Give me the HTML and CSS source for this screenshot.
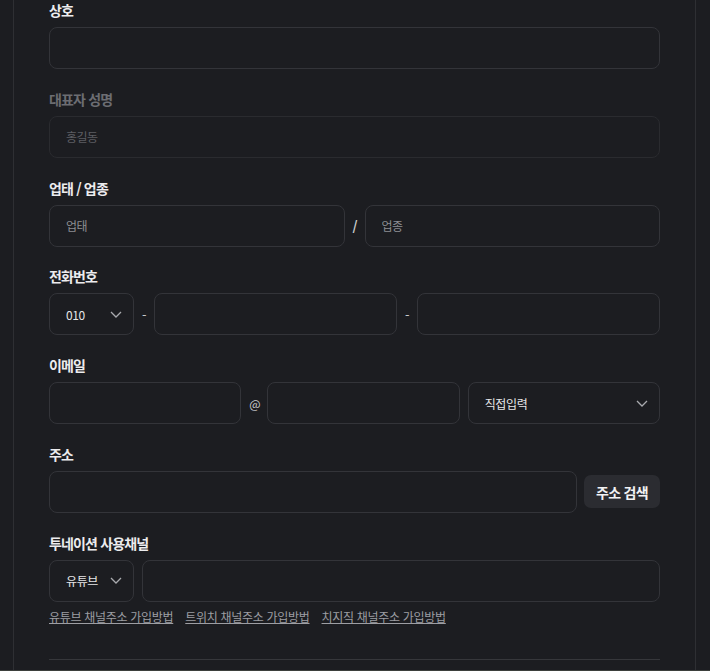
FILE: index.html
```html
<!DOCTYPE html>
<html lang="ko">
<head>
  <meta charset="UTF-8" />
  <title>사업자 정보</title>
  <link rel="stylesheet" href="styles.css">
</head>
<body>
  <div class="page">
    <div class="panel">

      <div class="field">
        <label class="field-label">상호</label>
        <input class="text-input" type="text" />
      </div>

      <div class="field disabled">
        <label class="field-label">대표자 성명</label>
        <input class="text-input" type="text" placeholder="홍길동" disabled />
      </div>

      <div class="field">
        <label class="field-label">업태 / 업종</label>
        <div class="row row-biz">
          <input class="text-input" type="text" placeholder="업태" />
          <span class="sep slash">/</span>
          <input class="text-input" type="text" placeholder="업종" />
        </div>
      </div>

      <div class="field">
        <label class="field-label">전화번호</label>
        <div class="row row-phone">
          <div class="select">
            <span>010</span>
            <svg width="12" height="7" viewBox="0 0 12 7"><path d="M1 1l5 5 5-5" fill="none" stroke="#a9aaae" stroke-width="1.3"/></svg>
          </div>
          <span class="sep">-</span>
          <input class="text-input" type="text" />
          <span class="sep">-</span>
          <input class="text-input" type="text" />
        </div>
      </div>

      <div class="field">
        <label class="field-label">이메일</label>
        <div class="row row-email">
          <input class="text-input" type="text" />
          <span class="sep at">@</span>
          <input class="text-input" type="text" />
          <div class="select">
            <span>직접입력</span>
            <svg width="12" height="7" viewBox="0 0 12 7"><path d="M1 1l5 5 5-5" fill="none" stroke="#a9aaae" stroke-width="1.3"/></svg>
          </div>
        </div>
      </div>

      <div class="field">
        <label class="field-label">주소</label>
        <div class="row row-address">
          <input class="text-input" type="text" />
          <button class="search-btn" type="button">주소 검색</button>
        </div>
      </div>

      <div class="field">
        <label class="field-label">투네이션 사용채널</label>
        <div class="row row-channel">
          <div class="select">
            <span>유튜브</span>
            <svg width="12" height="7" viewBox="0 0 12 7"><path d="M1 1l5 5 5-5" fill="none" stroke="#a9aaae" stroke-width="1.3"/></svg>
          </div>
          <input class="text-input" type="text" />
        </div>
        <div class="help-links">
          <a href="#">유튜브 채널주소 가입방법</a>
          <a href="#">트위치 채널주소 가입방법</a>
          <a href="#">치지직 채널주소 가입방법</a>
        </div>
      </div>

      <hr class="divider">
    </div>
  </div>
</body>
</html>
```

FILE: styles.css
```css
body {
  margin: 0;
  background-color: #1c1d21;
  font-family: "Noto Sans CJK KR", "Noto Sans", sans-serif;
  color: #e6e6e8;
}

.page {
  height: 670px;
  overflow: hidden;
  border-bottom: 1px solid #3d403d;
}

.panel {
  height: 100%;
  margin: 0 14px 0 13px;
  padding: 0 35px;
  border-left: 1px solid #2e2f33;
  border-right: 1px solid #2e2f33;
}

.field {
  margin-bottom: 19.8px;
}

.field-label {
  display: block;
  font-size: 14px;
  font-weight: bold;
  line-height: 18px;
  letter-spacing: -0.06em;
  padding-top: 1px;
  margin-bottom: 8px;
  color: #ececee;
}

.field.disabled .field-label {
  color: #6c6d72;
}

.row {
  display: grid;
  align-items: center;
  gap: 8px;
}

.row-biz {
  grid-template-columns: 1fr 4px 1fr;
}

.row-phone {
  grid-template-columns: 85px 4px 1fr 4px 1fr;
}

.row-email {
  grid-template-columns: 1fr 10px 1fr 1fr;
}

.row-address {
  grid-template-columns: 1fr 76px;
  gap: 7px;
}

.row-channel {
  grid-template-columns: 85px 1fr;
}

.text-input {
  box-sizing: border-box;
  display: block;
  width: 100%;
  min-width: 0;
  height: 42px;
  padding: 0 16px;
  background-color: #1c1d21;
  border: 1px solid #333439;
  border-radius: 8px;
  font-family: inherit;
  font-size: 12px;
  letter-spacing: -0.05em;
  color: #e6e6e8;
  outline: none;
}

.text-input::placeholder {
  color: #8c8d92;
}

.text-input:disabled {
  border-color: #2a2b2f;
}

.text-input:disabled::placeholder {
  color: #5d5e63;
}

.sep {
  font-size: 13px;
  color: #c9cacd;
  text-align: center;
}

.sep.slash {
  font-weight: bold;
}

.sep.at {
  font-size: 12px;
}

.select {
  box-sizing: border-box;
  display: flex;
  align-items: center;
  justify-content: space-between;
  height: 42px;
  padding: 0 11px 0 16px;
  border: 1px solid #333439;
  border-radius: 8px;
  font-size: 12px;
  letter-spacing: -0.03em;
  color: #e6e6e8;
}

.search-btn {
  height: 33px;
  border: none;
  border-radius: 7px;
  background-color: #2b2c31;
  font-family: inherit;
  font-size: 14px;
  font-weight: bold;
  letter-spacing: -0.05em;
  color: #f2f2f4;
}

.help-links {
  display: flex;
  gap: 12px;
  margin-top: 6px;
  line-height: 18px;
}

.help-links a {
  font-size: 12px;
  letter-spacing: -0.3px;
  color: #9d9ea3;
}

.divider {
  margin: 33px 0 0;
  border: none;
  border-top: 1px solid #36373b;
}
```
